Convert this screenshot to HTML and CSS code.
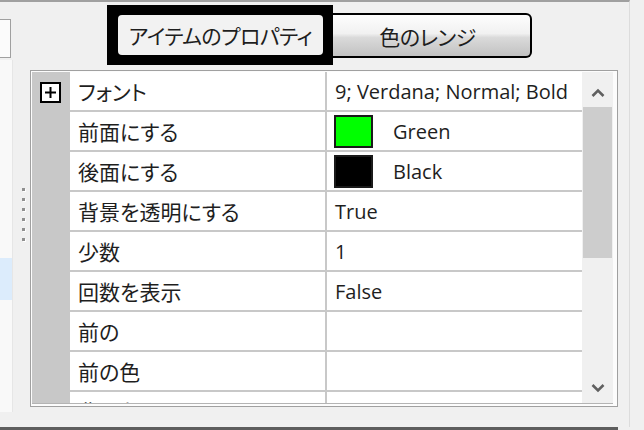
FILE: index.html
```html
<!DOCTYPE html>
<html lang="ja">
<head>
    <meta charset="UTF-8">
    <title>アイテムのプロパティ</title>
    <link rel="stylesheet" href="styles.css">
</head>
<body>
<div id="window">
    <div class="side">
        <div class="combo"></div>
        <div class="list">
            <div class="list-item selected"></div>
        </div>
    </div>

    <div class="splitter">
        <span class="grip"></span>
        <span class="grip"></span>
        <span class="grip"></span>
        <span class="grip"></span>
        <span class="grip"></span>
        <span class="grip"></span>
    </div>

    <div class="main">
        <div class="tabs">
            <div class="tab-focus">
                <div class="tab active">アイテムのプロパティ</div>
            </div>
            <div class="tab next">色のレンジ</div>
        </div>

        <div class="grid">
            <div class="grid-body">
                <div class="rows">
                    <div class="row">
                        <div class="margin">
                            <span class="expander">
                                <svg width="17" height="17" viewBox="0 0 17 17">
                                    <path d="M3 8.5H14M8.5 3V14" stroke="#000" stroke-width="2"/>
                                </svg>
                            </span>
                        </div>
                        <div class="name">フォント</div>
                        <div class="value">9; Verdana; Normal; Bold</div>
                    </div>
                    <div class="row">
                        <div class="margin"></div>
                        <div class="name">前面にする</div>
                        <div class="value"><span class="swatch green"></span>Green</div>
                    </div>
                    <div class="row">
                        <div class="margin"></div>
                        <div class="name">後面にする</div>
                        <div class="value"><span class="swatch black"></span>Black</div>
                    </div>
                    <div class="row">
                        <div class="margin"></div>
                        <div class="name">背景を透明にする</div>
                        <div class="value">True</div>
                    </div>
                    <div class="row">
                        <div class="margin"></div>
                        <div class="name">少数</div>
                        <div class="value">1</div>
                    </div>
                    <div class="row">
                        <div class="margin"></div>
                        <div class="name">回数を表示</div>
                        <div class="value">False</div>
                    </div>
                    <div class="row">
                        <div class="margin"></div>
                        <div class="name">前の</div>
                        <div class="value"></div>
                    </div>
                    <div class="row">
                        <div class="margin"></div>
                        <div class="name">前の色</div>
                        <div class="value"></div>
                    </div>
                    <div class="row">
                        <div class="margin"></div>
                        <div class="name">背景色</div>
                        <div class="value"></div>
                    </div>
                </div>

                <div class="scrollbar">
                    <div class="scroll-btn up">
                        <svg width="14" height="9" viewBox="0 0 14 9">
                            <polyline points="1.5,8 7,2.5 12.5,8" fill="none" stroke="#606060" stroke-width="2.6"/>
                        </svg>
                    </div>
                    <div class="thumb"></div>
                    <div class="track"></div>
                    <div class="scroll-btn down">
                        <svg width="14" height="9" viewBox="0 0 14 9">
                            <polyline points="1.5,1 7,6.5 12.5,1" fill="none" stroke="#606060" stroke-width="2.6"/>
                        </svg>
                    </div>
                </div>
            </div>
        </div>
    </div>
</div>
<div class="statusline"></div>
</body>
</html>
```

FILE: styles.css
```css
* {
    box-sizing: border-box;
    -webkit-font-smoothing: antialiased;
}

html, body {
    margin: 0;
}

body {
    width: 644px;
    height: 430px;
    overflow: hidden;
    background-color: #f0f0f0;
    font-family: "Noto Sans CJK JP", sans-serif;
    font-size: 21px;
    font-feature-settings: "palt";
    color: #1e1e1e;
}

#window {
    display: flex;
    width: 630px;
    height: 427px;
    border-top: 2px solid #a0a0a0;
    border-right: 1px solid #dcdcdc;
}

/* left list (cut off) */
.side {
    width: 13px;
    display: flex;
    flex-direction: column;
}

.combo {
    margin-top: 17px;
    width: 11px;
    height: 39px;
    background: #fbfbfb;
    border: 1px solid #a0a0a0;
    border-left: 0;
}

.list {
    margin-top: 2px;
    height: 352px;
    padding-top: 198px;
    background: #f9f9f9;
    border-right: 1px solid #e6e6e6;
}

.list-item {
    height: 42px;
}

.list-item.selected {
    background: #dcecfc;
}

.splitter {
    width: 17px;
    display: flex;
    flex-direction: column;
    justify-content: center;
    gap: 7px;
    padding-left: 9px;
}

.grip {
    width: 3px;
    height: 3px;
    background: #8f8f8f;
    box-shadow: 1px 1px 0 #fff;
}

.main {
    width: 588px;
    display: flex;
    flex-direction: column;
}

/* tabs */
.tabs {
    height: 68px;
    display: flex;
    align-items: flex-start;
    padding-left: 77px;
}

.tab-focus {
    margin-top: 3px;
    padding: 10px 10px 10px 11px;
    background: #000;
}

.tab {
    display: flex;
    align-items: center;
    justify-content: center;
    white-space: nowrap;
    letter-spacing: -0.5px;
}

.tab.active {
    width: 205px;
    height: 40px;
    background: #f2f2f2;
    border-radius: 4px;
}

.tab.next {
    margin-top: 11px;
    width: 199px;
    height: 45px;
    padding-right: 8px;
    border: 2px solid #000;
    border-left: 0;
    border-radius: 0 6px 6px 0;
    background: linear-gradient(#fdfdfd, #f1f1f1 45%, #dadada 55%, #c2c2c2);
}

/* property grid */
.grid {
    height: 337px;
    border: 1px solid #a0a0a0;
    padding: 1px 4px 2px 1px;
    background: #fcfcfc;
}

.grid-body {
    display: flex;
    height: 332px;
    border-bottom: 1px solid #b4b4b4;
}

.rows {
    width: 550px;
    flex-shrink: 0;
    display: flex;
    flex-direction: column;
    overflow: hidden;
}

.row {
    display: flex;
    height: 40px;
    flex-shrink: 0;
}

.row .margin {
    width: 38px;
    display: flex;
    align-items: center;
    padding-left: 8px;
    background: #c8c8c8;
}

.expander {
    flex-shrink: 0;
    width: 21px;
    height: 21px;
    margin-top: 1px;
    border: 2px solid #000;
    background: #fff;
}

.expander svg {
    display: block;
}

.row .name {
    width: 257px;
    display: flex;
    align-items: center;
    padding-left: 8px;
    white-space: nowrap;
    background: #fff;
    border-right: 2px solid #c8c8c8;
    border-bottom: 2px solid #c8c8c8;
}

.row .value {
    flex: 1;
    display: flex;
    align-items: center;
    padding-left: 8px;
    white-space: nowrap;
    overflow: hidden;
    font-family: "Open Sans", "Noto Sans CJK JP", sans-serif;
    font-size: 20px;
    background: #fff;
    border-bottom: 2px solid #c8c8c8;
}

.swatch {
    flex-shrink: 0;
    width: 39px;
    height: 33px;
    margin-left: -1px;
    margin-right: 20px;
    border: 2px solid #1a1a1a;
}

.swatch.green {
    background: #00ff00;
}

.swatch.black {
    background: #000;
}

.scrollbar {
    width: 31px;
    display: flex;
    flex-direction: column;
    background: #f0f0f0;
}

.scroll-btn {
    height: 35px;
    display: flex;
    align-items: center;
    justify-content: center;
    padding-top: 5px;
}

.thumb {
    height: 151px;
    margin: 0 1px;
    background: #cdcdcd;
}

.track {
    flex: 1;
}

.statusline {
    width: 618px;
    height: 3px;
    background: #5e5e5e;
}
```
